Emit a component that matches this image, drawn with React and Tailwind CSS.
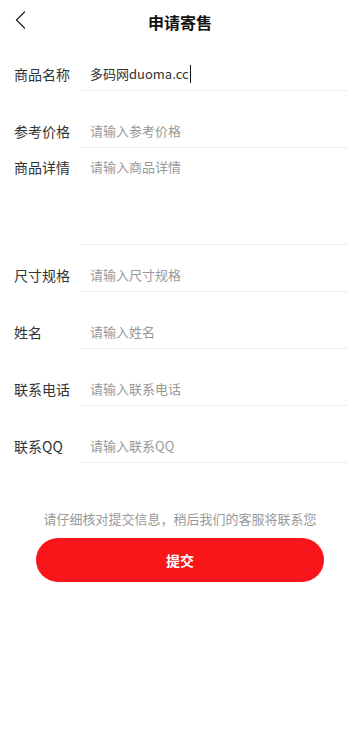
import React from "react";

const font = { fontFamily: '"Noto Sans CJK SC", "Noto Sans", sans-serif' };

function Row({ label, placeholder, className = "" }) {
  return (
    <div className={"flex pl-[14px] pr-[12px] " + className}>
      <div className="w-[66px] h-[34px] flex items-center text-[14px] text-[#333]">{label}</div>
      <div className="flex-1 h-[34px] border-b border-[#eeeeee] flex items-center">
        <input
          className="w-full pl-[10px] text-[13px] text-[#333] placeholder:text-[#999] outline-none bg-transparent"
          style={font}
          placeholder={placeholder}
        />
      </div>
    </div>
  );
}

export default function App() {
  return (
    <div className="w-[360px] min-h-[740px] bg-white" style={font}>
      {/* Header */}
      <div className="relative h-[44px] flex items-center justify-center">
        <button className="absolute left-[10px] top-[8px] w-[20px] h-[24px] flex items-center justify-center">
          <svg width="14" height="20" viewBox="0 0 14 20" fill="none">
            <path d="M11.5 2 L3.5 10 L11.5 18" stroke="#222" strokeWidth="1.3" strokeLinecap="round" strokeLinejoin="round" />
          </svg>
        </button>
        <h1 className="text-[16px] font-bold text-[#111]">申请寄售</h1>
      </div>

      {/* Form */}
      <div className="flex pl-[14px] pr-[12px] mt-[13px]">
        <div className="w-[66px] h-[34px] flex items-center text-[14px] text-[#333]">商品名称</div>
        <div className="flex-1 h-[34px] border-b border-[#eeeeee] flex items-center pl-[10px] text-[13px] text-[#333]">
          多码网duoma.cc
          <span className="inline-block w-px h-[18px] bg-[#111] ml-px"></span>
        </div>
      </div>

      <Row label="参考价格" placeholder="请输入参考价格" className="mt-[23px]" />

      <div className="flex pl-[14px] pr-[12px]">
        <div className="w-[66px] pt-[9px] text-[14px] leading-[20px] text-[#333]">商品详情</div>
        <div className="flex-1 h-[97px] border-b border-[#eeeeee]">
          <textarea
            className="w-full h-full pl-[10px] pt-[9px] text-[13px] leading-[20px] text-[#333] placeholder:text-[#999] outline-none resize-none bg-transparent"
            style={font}
            placeholder="请输入商品详情"
          />
        </div>
      </div>

      <Row label="尺寸规格" placeholder="请输入尺寸规格" className="mt-[13px]" />
      <Row label="姓名" placeholder="请输入姓名" className="mt-[23px]" />
      <Row label="联系电话" placeholder="请输入联系电话" className="mt-[23px]" />
      <Row label="联系QQ" placeholder="请输入联系QQ" className="mt-[23px]" />

      {/* Footer */}
      <p className="mt-[47px] text-center text-[13px] leading-[18px] text-[#999]">
        请仔细核对提交信息，稍后我们的客服将联系您
      </p>
      <div className="px-[36px] mt-[10px]">
        <button className="w-full h-[44px] rounded-full bg-[#f8161b] text-white text-[14px] font-bold" style={font}>
          提交
        </button>
      </div>
    </div>
  );
}
